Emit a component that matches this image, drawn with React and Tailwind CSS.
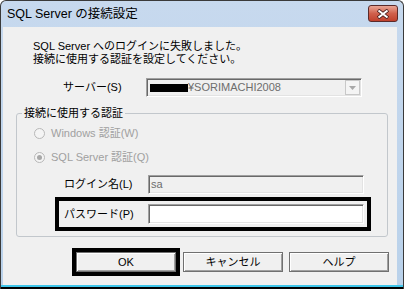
import React from "react";

const FONT = { fontFamily: '"Liberation Sans", "Noto Sans CJK JP", sans-serif' };

const sunken =
  "border border-t-[#a0a0a0] border-l-[#a0a0a0] border-r-[#fff] border-b-[#fff] shadow-[inset_1px_1px_#696969,inset_-1px_-1px_#e3e3e3]";

const raised =
  "border border-[#707070] shadow-[inset_1px_1px_#fff,inset_-1px_-1px_#a0a0a0]";

function Button({ children }) {
  return (
    <button className={`w-[100px] h-[20px] bg-[#f0f0f0] text-[11px] leading-none text-black flex items-center justify-center ${raised}`}>
      {children}
    </button>
  );
}

function Radio({ checked, label }) {
  return (
    <div className="flex items-center h-[16px] text-[11px] text-[#a0a0a0]">
      <span className="w-[11px] h-[11px] rounded-full border border-[#b8b8b8] bg-[#f4f4f4] flex items-center justify-center">
        {checked && <span className="w-[5px] h-[5px] rounded-full bg-[#a8a8a8]" />}
      </span>
      <span className="ml-[6px]">{label}</span>
    </div>
  );
}

export default function App() {
  return (
    <div className="w-[404px] h-[289px] bg-white" style={FONT}>
      <div className="w-[404px] h-[289px] flex flex-col rounded-t-[6px] border border-b-0 border-[#3a3a3a] bg-gradient-to-b from-[#c7d9ee] to-[#b9d1ea] overflow-hidden">
        {/* title bar */}
        <div className="h-[26px] flex items-center justify-between pl-[6px] pr-[5px] shrink-0">
          <span className="text-[12.5px] text-black leading-none mt-[1px]">SQL Server の接続設定</span>
          <div className="w-[30px] h-[17px] mt-[-1px] rounded-[3px] border border-[#5a2a2a] bg-gradient-to-b from-[#e8a595] via-[#d0604c] to-[#c0402c] flex items-center justify-center">
            <svg width="14" height="10" viewBox="0 0 14 10">
              <path d="M2 1 L12 9 M12 1 L2 9" stroke="#4a2020" strokeWidth="3.6" fill="none" />
              <path d="M2.5 1.5 L11.5 8.5 M11.5 1.5 L2.5 8.5" stroke="#fff" strokeWidth="2" fill="none" />
            </svg>
          </div>
        </div>

        {/* client */}
        <div className="flex-1 ml-[2px] mr-[6px] bg-[#f0f0f0] flex flex-col text-black">
          <p className="mt-[13px] ml-[30px] text-[11px] leading-[13px]">
            SQL Server へのログインに失敗しました。
            <br />
            接続に使用する認証を設定してください。
          </p>

          <div className="mt-[12px] flex items-center h-[19px]">
            <span className="ml-[60px] w-[83px] text-[11px]">サーバー(S)</span>
            <div className={`w-[216px] h-[19px] bg-[#f0f0f0] flex items-center ${sunken}`}>
              <span className="ml-[3px] w-[38px] h-[8px] bg-black" />
              <span className="text-[11px] text-[#6d6d6d] leading-none">¥SORIMACHI2008</span>
              <span className="ml-auto mr-[1px] w-[15px] h-[15px] bg-[#f4f4f4] border border-[#c8c8c8] flex items-center justify-center">
                <svg width="7" height="4" viewBox="0 0 7 4">
                  <path d="M0 0 H7 L3.5 4 Z" fill="#a8a8a8" />
                </svg>
              </span>
            </div>
          </div>

          <fieldset className="mt-[10px] ml-[13px] w-[372px] h-[130px] border border-[#c2c7cc] rounded-[3px] p-0 min-w-0">
            <legend className="ml-[5px] px-[2px] text-[11px] leading-[13px]">接続に使用する認証</legend>
            <div className="flex flex-col pl-[17px] mt-[5px]">
              <Radio label="Windows 認証(W)" />
              <div className="mt-[8px]">
                <Radio checked label="SQL Server 認証(Q)" />
              </div>
            </div>
            <div className="mt-[10px] flex items-center h-[19px]">
              <span className="ml-[47px] w-[84px] text-[11px]">ログイン名(L)</span>
              <div className={`w-[216px] h-[19px] bg-[#f0f0f0] flex items-center ${sunken}`}>
                <span className="ml-[2px] text-[11px] text-[#6d6d6d] leading-none">sa</span>
              </div>
            </div>
            <div className="mt-[3px] ml-[38px] w-[316px] h-[34px] border-[4px] border-black flex items-center">
              <span className="ml-[5px] w-[84px] text-[11px]">パスワード(P)</span>
              <div className={`w-[216px] h-[20px] bg-white ${sunken}`} />
            </div>
          </fieldset>

          <div className="mt-[11px] ml-[69px] flex items-start">
            <div className="border-[4px] border-black">
              <Button>OK</Button>
            </div>
            <div className="ml-[3px] mt-[4px]">
              <Button>キャンセル</Button>
            </div>
            <div className="ml-[6px] mt-[4px]">
              <Button>ヘルプ</Button>
            </div>
          </div>
        </div>

        <div className="h-[2px] shrink-0 bg-[#3fc6ea]" />
        <div className="h-[2px] shrink-0 bg-black" />
      </div>
    </div>
  );
}
